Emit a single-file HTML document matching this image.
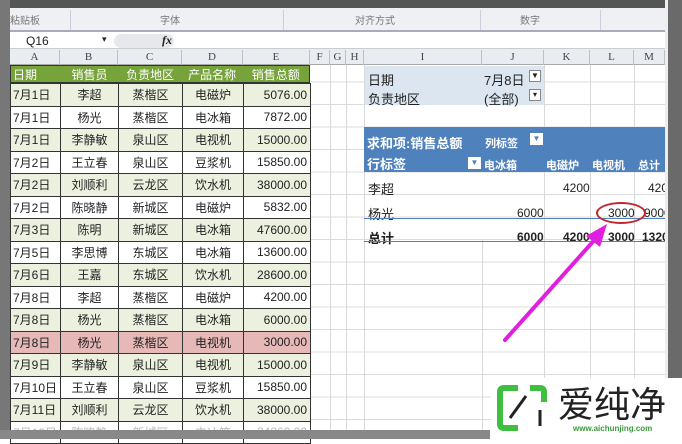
<!DOCTYPE html>
<html><head><meta charset="utf-8"><style>
*{margin:0;padding:0;box-sizing:border-box}
body{width:682px;height:439px;overflow:hidden;background:#fff;position:relative;font-family:"Liberation Sans","Noto Sans CJK SC",sans-serif;font-size:12px;color:#222}
.a{position:absolute}
table{border-collapse:collapse;position:absolute;left:10px;top:82px;table-layout:fixed}
td{height:22.5px;border:1px solid #333;text-align:center;font-size:12px;padding:0 3px;white-space:nowrap;overflow:hidden}
td:first-child{text-align:left;padding-left:2px}
td:last-child{text-align:right}
tr:nth-child(odd) td{background:#ebf1de}
tr.p td{background:#e6b8b7}
.gl{position:absolute;background:#d9d9d9}
.ch{position:absolute;top:50px;height:15px;text-align:center;font-family:"Liberation Serif",serif;font-size:11px;color:#444;border-right:1px solid #c0c0c0;line-height:15px}
</style></head><body>
<div class="a" style="left:0;top:0;width:682px;height:8px;background:#555"></div>
<div class="a" style="left:0;top:8px;width:682px;height:24px;background:#eef0f4;border-bottom:2px solid #aab"></div>
<div class="a" style="left:10px;top:12px;font-size:10px;color:#777">粘贴板</div>
<div class="a" style="left:160px;top:12px;font-size:10px;color:#777">字体</div>
<div class="a" style="left:355px;top:12px;font-size:10px;color:#777">对齐方式</div>
<div class="a" style="left:520px;top:12px;font-size:10px;color:#777">数字</div>
<div class="a" style="left:70px;top:10px;width:1px;height:20px;background:#ccd"></div>
<div class="a" style="left:283px;top:10px;width:1px;height:20px;background:#ccd"></div>
<div class="a" style="left:480px;top:10px;width:1px;height:20px;background:#ccd"></div>
<div class="a" style="left:600px;top:10px;width:1px;height:20px;background:#ccd"></div>
<div class="a" style="left:0;top:33px;width:682px;height:16px;background:#fff;border-bottom:1px solid #ccc"></div>
<div class="a" style="left:26px;top:34px;font-size:12px">Q16</div>
<div class="a" style="left:102px;top:34px;font-size:9px">▾</div>
<div class="a" style="left:114px;top:34px;width:60px;height:14px;border-radius:7px;background:#e6e8ec"></div>
<div class="a" style="left:162px;top:33px;font-style:italic;font-family:'Liberation Serif';font-weight:bold;font-size:12px">fx</div>
<div class="a" style="left:0;top:49px;width:682px;height:16px;background:#e9ecf1;border-bottom:1px solid #aaa"></div>
<div class="a" style="left:0;top:0;width:10px;height:439px;background:#777"></div>
<div class="ch" style="left:10px;width:50px">A</div>
<div class="ch" style="left:60px;width:58px">B</div>
<div class="ch" style="left:118px;width:64px">C</div>
<div class="ch" style="left:182px;width:61px">D</div>
<div class="ch" style="left:243px;width:67px">E</div>
<div class="ch" style="left:310px;width:20px">F</div>
<div class="ch" style="left:330px;width:16px">G</div>
<div class="ch" style="left:346px;width:18px">H</div>
<div class="ch" style="left:364px;width:118px">I</div>
<div class="ch" style="left:482px;width:62px">J</div>
<div class="ch" style="left:544px;width:46px">K</div>
<div class="ch" style="left:590px;width:44px">L</div>
<div class="ch" style="left:634px;width:31px">M</div>
<!-- grid lines right -->
<div class="gl" style="left:330px;top:65px;width:1px;height:374px"></div>
<div class="gl" style="left:346px;top:65px;width:1px;height:374px"></div>
<div class="gl" style="left:364px;top:65px;width:1px;height:374px"></div>
<div class="gl" style="left:482px;top:240px;width:1px;height:199px"></div>
<div class="gl" style="left:544px;top:65px;width:1px;height:374px"></div>
<div class="gl" style="left:590px;top:65px;width:1px;height:374px"></div>
<div class="gl" style="left:634px;top:65px;width:1px;height:374px"></div>
<div class="a" style="left:310px;top:65px;width:355px;height:374px;background:repeating-linear-gradient(to bottom,transparent 0,transparent 21.5px,#dcdcdc 21.5px,#dcdcdc 22.5px);background-position:0 -5px;z-index:-1"></div>
<table>
<colgroup><col style="width:50px"><col style="width:58px"><col style="width:64px"><col style="width:61px"><col style="width:67px"></colgroup>
<tr style="height:18px"><td colspan="5" style="display:none"></td></tr>
</table>
<div class="a" style="left:10px;top:65px;width:300px;height:18px;background:#76a33a;display:flex;color:#fff;font-size:12px;line-height:18px;border:1px solid #333">
<div style="width:50px;text-align:left;padding-left:2px">日期</div><div style="width:58px;text-align:center">销售员</div><div style="width:64px;text-align:center">负责地区</div><div style="width:61px;text-align:center">产品名称</div><div style="width:67px;text-align:center">销售总额</div></div>
<table style="top:83px">
<colgroup><col style="width:50px"><col style="width:58px"><col style="width:64px"><col style="width:61px"><col style="width:67px"></colgroup>
<tr><td>7月1日</td><td>李超</td><td>蒸楷区</td><td>电磁炉</td><td>5076.00</td></tr>
<tr><td>7月1日</td><td>杨光</td><td>蒸楷区</td><td>电冰箱</td><td>7872.00</td></tr>
<tr><td>7月1日</td><td>李静敏</td><td>泉山区</td><td>电视机</td><td>15000.00</td></tr>
<tr><td>7月2日</td><td>王立春</td><td>泉山区</td><td>豆浆机</td><td>15850.00</td></tr>
<tr><td>7月2日</td><td>刘顺利</td><td>云龙区</td><td>饮水机</td><td>38000.00</td></tr>
<tr><td>7月2日</td><td>陈晓静</td><td>新城区</td><td>电磁炉</td><td>5832.00</td></tr>
<tr><td>7月3日</td><td>陈明</td><td>新城区</td><td>电冰箱</td><td>47600.00</td></tr>
<tr><td>7月5日</td><td>李思博</td><td>东城区</td><td>电冰箱</td><td>13600.00</td></tr>
<tr><td>7月6日</td><td>王嘉</td><td>东城区</td><td>饮水机</td><td>28600.00</td></tr>
<tr><td>7月8日</td><td>李超</td><td>蒸楷区</td><td>电磁炉</td><td>4200.00</td></tr>
<tr><td>7月8日</td><td>杨光</td><td>蒸楷区</td><td>电冰箱</td><td>6000.00</td></tr>
<tr class="p"><td>7月8日</td><td>杨光</td><td>蒸楷区</td><td>电视机</td><td>3000.00</td></tr>
<tr><td>7月9日</td><td>李静敏</td><td>泉山区</td><td>电视机</td><td>15000.00</td></tr>
<tr><td>7月10日</td><td>王立春</td><td>泉山区</td><td>豆浆机</td><td>15850.00</td></tr>
<tr><td>7月11日</td><td>刘顺利</td><td>云龙区</td><td>饮水机</td><td>38000.00</td></tr>
<tr><td style="color:#bbb">7月12日</td><td style="color:#bbb">陈晓静</td><td style="color:#bbb">新城区</td><td style="color:#bbb">电冰箱</td><td style="color:#bbb">24360.00</td></tr>
</table>
<div class="a" style="left:0;top:430px;width:490px;height:9px;background:#888"></div>
<!-- pivot -->
<div class="a" style="left:365px;top:66px;width:179px;height:39px;background:#dce6f1"></div>
<div class="a" style="left:368px;top:70px;font-size:13px">日期</div>
<div class="a" style="left:368px;top:89px;font-size:13px">负责地区</div>
<div class="a" style="left:484px;top:70px;font-size:13px">7月8日</div>
<div class="a" style="left:484px;top:89px;font-size:13px">(全部)</div>
<div class="a" style="left:529px;top:70px;width:12px;height:12px;border:1px solid #888;background:#fff;font-size:8px;text-align:center;line-height:10px">▼</div>
<div class="a" style="left:529px;top:89px;width:12px;height:12px;border:1px solid #888;background:#fff;font-size:8px;text-align:center;line-height:10px">▾</div>
<div class="a" style="left:364px;top:127px;width:301px;height:45px;background:#4f81bd;color:#fff;font-weight:bold"></div>
<div class="a" style="left:367px;top:133px;color:#fff;font-weight:bold;font-size:13px">求和项:销售总额</div>
<div class="a" style="left:485px;top:135px;color:#fff;font-weight:bold;font-size:11px">列标签</div>
<div class="a" style="left:530px;top:133px;width:13px;height:12px;background:#fff;color:#4f81bd;font-size:8px;text-align:center;line-height:12px">▼</div>
<div class="a" style="left:367px;top:154px;color:#fff;font-weight:bold;font-size:13px">行标签</div>
<div class="a" style="left:468px;top:157px;width:13px;height:12px;background:#fff;color:#4f81bd;font-size:8px;text-align:center;line-height:12px">▼</div>
<div class="a" style="left:484px;top:157px;color:#fff;font-weight:bold;font-size:11px">电冰箱</div>
<div class="a" style="left:546px;top:157px;color:#fff;font-weight:bold;font-size:11px">电磁炉</div>
<div class="a" style="left:592px;top:157px;color:#fff;font-weight:bold;font-size:11px">电视机</div>
<div class="a" style="left:638px;top:157px;color:#fff;font-weight:bold;font-size:11px">总计</div>
<div class="a" style="left:368px;top:179px;font-size:13px">李超</div>
<div class="a" style="left:563px;top:181px">4200</div>
<div class="a" style="left:648px;top:181px">4200</div>
<div class="a" style="left:368px;top:204px;font-size:13px">杨光</div>
<div class="a" style="left:517px;top:206px">6000</div>
<div class="a" style="left:608px;top:206px">3000</div>
<div class="a" style="left:644px;top:206px">9000</div>
<div class="a" style="left:364px;top:218px;width:301px;height:1px;background:#4f81bd"></div>
<div class="a" style="left:368px;top:228px;font-size:13px;font-weight:bold">总计</div>
<div class="a" style="left:517px;top:230px;font-weight:bold">6000</div>
<div class="a" style="left:563px;top:230px;font-weight:bold">4200</div>
<div class="a" style="left:608px;top:230px;font-weight:bold">3000</div>
<div class="a" style="left:642px;top:230px;font-weight:bold">13200</div>
<div class="a" style="left:364px;top:241px;width:301px;height:1px;background:#4f81bd"></div>
<div class="a" style="left:596px;top:202px;width:50px;height:22px;border:2px solid #c0272d;border-radius:50%"></div>
<div class="a" style="left:665px;top:0;width:17px;height:439px;background:#6a6a6a"></div>
<div class="a" style="left:665px;top:0;width:3px;height:439px;background:#eee"></div>
<svg class="a" style="left:0;top:0" width="682" height="439"><line x1="505" y1="340" x2="598" y2="236" stroke="#e020e0" stroke-width="4" stroke-linecap="round"/><polygon points="607,224 586,236 600,247" fill="#e020e0"/></svg>
<div class="a" style="left:491px;top:378px;width:191px;height:61px;background:#fff"></div>
<svg class="a" style="left:496px;top:384px" width="60" height="50"><path d="M22 4H8Q4 4 4 8V40Q4 44 8 44H22M34 4H44Q48 4 48 8V18" fill="none" stroke="#3fbf3f" stroke-width="6"/><path d="M14 34L30 12" stroke="#222" stroke-width="3"/><path d="M44 26V42" stroke="#222" stroke-width="3"/></svg>
<div class="a" style="left:558px;top:382px;font-size:36px;line-height:40px;color:#222;font-family:'Noto Sans CJK SC',sans-serif">爱纯净</div>
<div class="a" style="left:573px;top:424px;font-size:8px;color:#3a9a3a;font-weight:bold">www.aichunjing.com</div>
</body></html>
